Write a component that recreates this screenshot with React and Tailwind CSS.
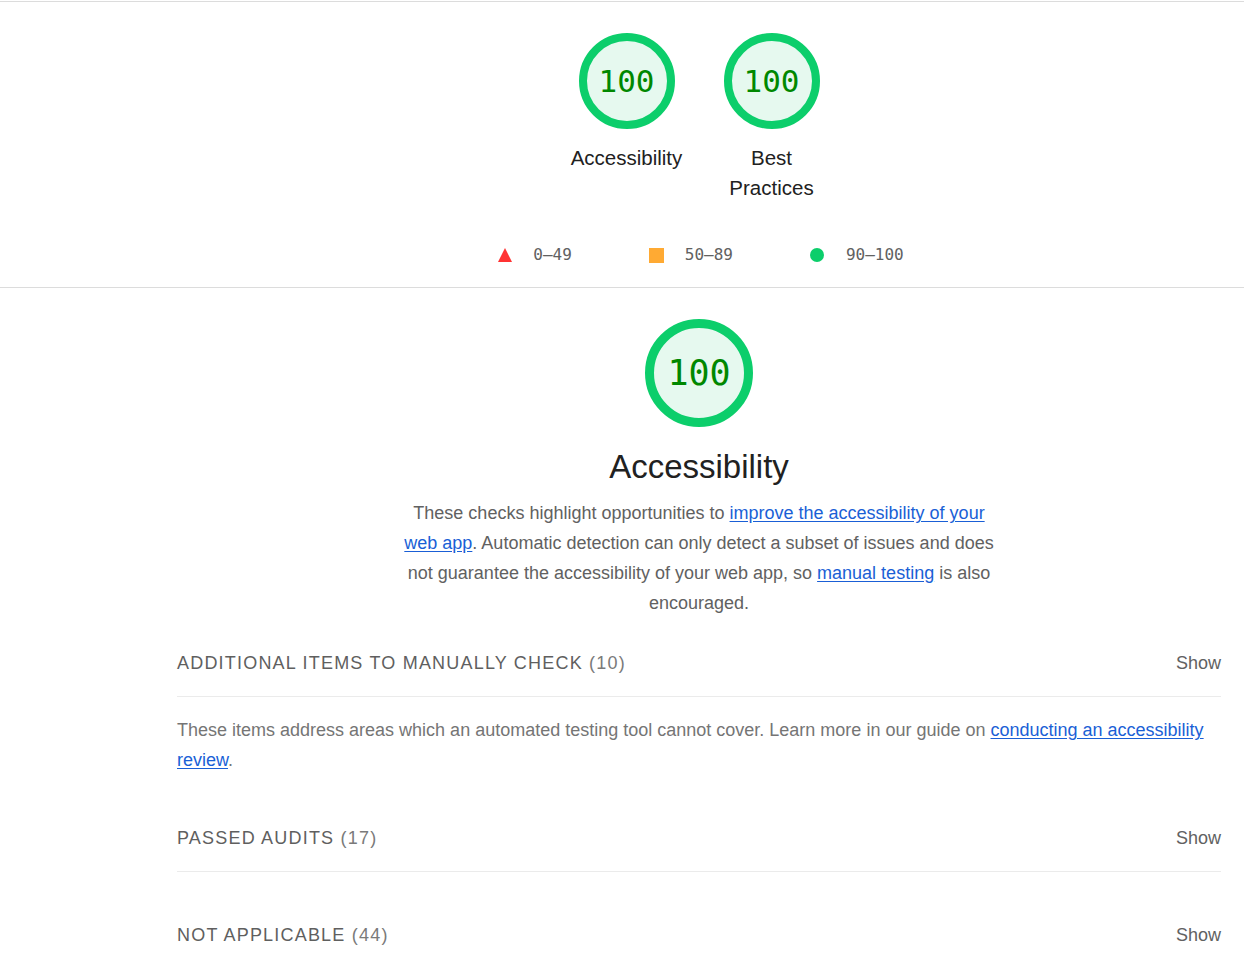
import React from "react";

const mono = { fontFamily: "'DejaVu Sans Mono', 'Liberation Mono', monospace" };

const Gauge = ({ value, size = "sm" }) => {
  const big = size === "lg";
  const d = big ? 108 : 96;
  const sw = big ? 9 : 8;
  const r = (d - sw) / 2;
  return (
    <div className={big ? "relative w-[108px] h-[108px]" : "relative w-[96px] h-[96px]"}>
      <svg width={d} height={d} viewBox={`0 0 ${d} ${d}`}>
        <circle cx={d / 2} cy={d / 2} r={r} fill="#e6f9ef" stroke="#0cce6b" strokeWidth={sw} />
      </svg>
      <div
        className={
          big
            ? "absolute inset-0 flex items-center justify-center text-[35px] text-[#008800]"
            : "absolute inset-0 flex items-center justify-center text-[31px] text-[#008800]"
        }
        style={mono}
      >
        {value}
      </div>
    </div>
  );
};

const Link = ({ children }) => (
  <a href="#" className="text-[#1a5fd6] underline underline-offset-2">
    {children}
  </a>
);

const GroupHeader = ({ title, count, border = true }) => (
  <div
    className={
      border
        ? "flex items-center justify-between pb-[21px] border-b border-[#ebebeb]"
        : "flex items-center justify-between"
    }
  >
    <div className="text-[18px] leading-6 tracking-[1.2px] text-[#5f5f5f]">
      {title} <span className="text-[#7a7a7a]">({count})</span>
    </div>
    <button className="text-[18px] leading-6 text-[#616161]">Show</button>
  </div>
);

export default function App() {
  return (
    <div className="min-h-screen bg-white pt-px" style={{ fontFamily: "'Liberation Sans', Arial, sans-serif" }}>
      {/* score summary */}
      <div className="border-t border-[#dcdcdc] border-b">
        <div className="pl-[177px] pr-[23px]">
          <div className="flex justify-center gap-[49px] pt-[31px]">
            <div className="w-[96px] flex flex-col items-center">
              <Gauge value="100" />
              <div className="mt-[14px] w-[140px] text-center text-[20.5px] leading-[30px] text-[#212121]">
                Accessibility
              </div>
            </div>
            <div className="w-[96px] flex flex-col items-center">
              <Gauge value="100" />
              <div className="mt-[14px] w-[110px] text-center text-[20.5px] leading-[30px] text-[#212121]">
                Best Practices
              </div>
            </div>
          </div>
          <div className="flex justify-center gap-[77px] mt-[42px] ml-[4px] pb-[22px] text-[16px] leading-5 text-[#616161]" style={mono}>
            <div className="flex items-center gap-[21px]">
              <svg width="14" height="14" viewBox="0 0 14 14">
                <polygon points="7,0 14,14 0,14" fill="#ff3333" />
              </svg>
              <span>0–49</span>
            </div>
            <div className="flex items-center gap-[21px]">
              <span className="w-[15px] h-[15px] bg-[#ffaa33]" />
              <span>50–89</span>
            </div>
            <div className="flex items-center gap-[22px]">
              <span className="w-[14px] h-[14px] rounded-full bg-[#0cce6b]" />
              <span>90–100</span>
            </div>
          </div>
        </div>
      </div>

      {/* category */}
      <div className="pl-[177px] pr-[23px]">
        <div className="flex flex-col items-center pt-[31px]">
          <Gauge value="100" size="lg" />
          <h2 className="mt-[20px] text-[33px] leading-[40px] text-[#212121]">Accessibility</h2>
          <p className="mt-[11px] w-[600px] text-center text-[18px] leading-[30px] text-[#616161]">
            These checks highlight opportunities to <Link>improve the accessibility of your web app</Link>. Automatic
            detection can only detect a subset of issues and does not guarantee the accessibility of your web app, so{" "}
            <Link>manual testing</Link> is also encouraged.
          </p>
        </div>

        <div className="mt-[33px]">
          <GroupHeader title="ADDITIONAL ITEMS TO MANUALLY CHECK" count="10" />
          <p className="mt-[18px] text-[18px] leading-[30px] text-[#757575]">
            These items address areas which an automated testing tool cannot cover. Learn more in our guide on{" "}
            <Link>conducting an accessibility review</Link>.
          </p>
        </div>

        <div className="mt-[51px]">
          <GroupHeader title="PASSED AUDITS" count="17" />
        </div>

        <div className="mt-[51px]">
          <GroupHeader title="NOT APPLICABLE" count="44" border={false} />
        </div>
      </div>
    </div>
  );
}
